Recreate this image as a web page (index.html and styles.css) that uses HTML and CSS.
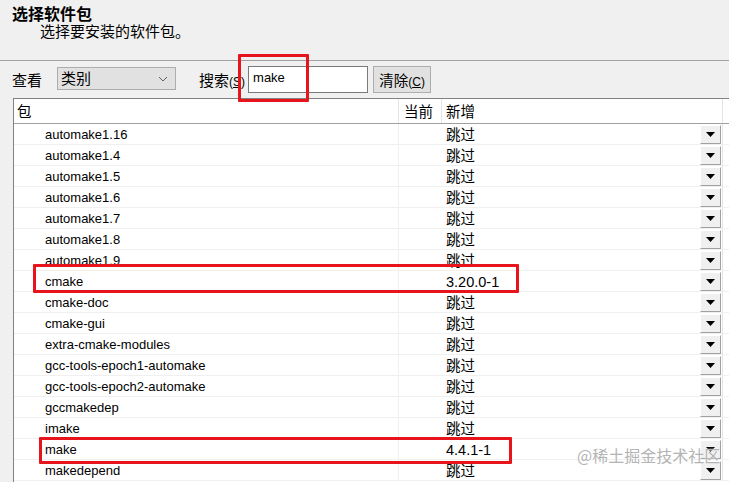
FILE: index.html
```html
<!DOCTYPE html>
<html>
<head>
    <title>选择软件包</title>
    <link rel="stylesheet" href="styles.css">
</head>
<body>
    <div class="page">
        <div class="page-header">
            <h1 class="page-title">选择软件包</h1>
            <p class="page-subtitle">选择要安装的软件包。</p>
        </div>

        <div class="toolbar">
            <span class="tool-label view-label">查看</span>
            <div class="combo">
                <span class="combo-text">类别</span>
                <svg class="combo-arrow" width="10" height="6" viewBox="0 0 10 6"><path d="M1 1 L5 5 L9 1" fill="none" stroke="#606060" stroke-width="1"/></svg>
            </div>
            <span class="tool-label search-label">搜索<span class="accel">(<u>S</u>)</span></span>
            <input type="text" class="search-input" value="make">
            <button class="clear-button">清除<span class="accel">(<u>C</u>)</span></button>
        </div>

        <div class="list">
            <div class="list-head">
                <div class="col col-name">包</div>
                <div class="col col-cur">当前</div>
                <div class="col col-new">新增</div>
            </div>
            <div class="list-body" id="listBody"></div>
        </div>

        <div class="mark mark-search"></div>
        <div class="mark mark-cmake"></div>
        <div class="mark mark-make"></div>
        <div class="watermark">@稀土掘金技术社区</div>
    </div>

    <script>
        const packages = [
            ['automake1.16', '跳过'],
            ['automake1.4', '跳过'],
            ['automake1.5', '跳过'],
            ['automake1.6', '跳过'],
            ['automake1.7', '跳过'],
            ['automake1.8', '跳过'],
            ['automake1.9', '跳过'],
            ['cmake', '3.20.0-1'],
            ['cmake-doc', '跳过'],
            ['cmake-gui', '跳过'],
            ['extra-cmake-modules', '跳过'],
            ['gcc-tools-epoch1-automake', '跳过'],
            ['gcc-tools-epoch2-automake', '跳过'],
            ['gccmakedep', '跳过'],
            ['imake', '跳过'],
            ['make', '4.4.1-1'],
            ['makedepend', '跳过']
        ];

        const listBody = document.getElementById('listBody');
        packages.forEach(function (pkg) {
            const row = document.createElement('div');
            row.className = 'row';
            row.innerHTML =
                '<div class="cell cell-name">' + pkg[0] + '</div>' +
                '<div class="cell cell-cur"></div>' +
                '<div class="cell cell-new"><span class="new-text">' + pkg[1] + '</span>' +
                '<span class="drop-button"><svg width="9" height="5" viewBox="0 0 9 5"><path d="M0 0 H9 L4.5 5 Z" fill="#000"/></svg></span></div>';
            listBody.appendChild(row);
        });
    </script>
</body>
</html>
```

FILE: styles.css
```css
body {
    margin: 0;
    padding: 0;
    background-color: #f0f0f0;
    font-family: 'Liberation Sans', 'Noto Sans CJK SC', sans-serif;
    color: #000;
    overflow: hidden;
}

.page {
    position: relative;
    width: 729px;
    height: 482px;
    overflow: hidden;
}

.page-header {
    height: 61px;
    border-bottom: 1px solid #a0a0a0;
    box-sizing: border-box;
    padding: 4px 0 0 12px;
}

.page-title {
    margin: 0;
    font-family: 'Noto Sans CJK SC', sans-serif;
    font-size: 16px;
    font-weight: bold;
    line-height: 18px;
}

.page-subtitle {
    margin: 1px 0 0;
    padding-left: 28px;
    font-family: 'Noto Sans CJK SC', sans-serif;
    font-size: 15px;
    line-height: 16px;
}

.toolbar {
    display: flex;
    align-items: center;
    height: 37px;
    padding-left: 12px;
    box-sizing: border-box;
}

.tool-label {
    font-family: 'Noto Sans CJK SC', sans-serif;
    font-size: 15px;
}

.accel {
    font-family: 'Liberation Sans', sans-serif;
    font-size: 12px;
}

.combo {
    display: flex;
    align-items: center;
    justify-content: space-between;
    width: 119px;
    height: 23px;
    box-sizing: border-box;
    margin-left: 15px;
    margin-top: -2px;
    padding: 0 7px 0 3px;
    background-color: #e1e1e1;
    border: 1px solid #adadad;
}

.combo-text {
    font-family: 'Noto Sans CJK SC', sans-serif;
    font-size: 15px;
    margin-top: -3px;
}

.search-label {
    margin-left: 23px;
}

.search-input {
    width: 120px;
    height: 27px;
    box-sizing: border-box;
    margin: 0 0 0 3px;
    padding: 0 0 4px 4px;
    border: 1px solid #7a7a7a;
    background-color: #fff;
    font-family: 'Liberation Sans', sans-serif;
    font-size: 13px;
    outline: none;
}

.clear-button {
    width: 58px;
    height: 27px;
    margin-left: 5px;
    padding: 0;
    background-color: #e1e1e1;
    border: 1px solid #adadad;
    font-family: 'Noto Sans CJK SC', sans-serif;
    font-size: 14.5px;
    color: #000;
}

.list {
    margin-left: 13px;
    border-top: 1px solid #828282;
    border-left: 1px solid #828282;
    background-color: #fff;
    height: 400px;
}

.list-head {
    display: flex;
    height: 25px;
    border-bottom: 1px solid #a0a0a0;
    box-sizing: border-box;
}

.col {
    font-family: 'Noto Sans CJK SC', sans-serif;
    font-size: 14.5px;
    line-height: 24px;
    border-right: 1px solid #e5e5e5;
    box-sizing: border-box;
}

.col-name {
    width: 385px;
    padding-left: 3px;
}

.col-cur {
    width: 43px;
    padding-left: 5px;
}

.col-new {
    width: 281px;
    padding-left: 4px;
}

.row {
    display: flex;
    height: 21px;
    border-bottom: 1px solid #f0f0f0;
    box-sizing: border-box;
}

.cell {
    font-size: 13px;
    line-height: 20px;
    box-sizing: border-box;
}

.cell-name {
    width: 385px;
    padding: 1px 0 0 31px;
    border-right: 1px solid #f0f0f0;
}

.cell-cur {
    width: 43px;
}

.cell-new {
    display: flex;
    align-items: center;
    justify-content: space-between;
    width: 281px;
    padding-left: 4px;
    border-right: 1px solid #e5e5e5;
}

.new-text {
    font-family: 'Liberation Sans', 'Noto Sans CJK SC', sans-serif;
    font-size: 14.5px;
    margin-top: 1px;
}

.drop-button {
    display: flex;
    align-items: center;
    justify-content: center;
    width: 21px;
    height: 19px;
    margin-right: 1px;
    box-sizing: border-box;
    background-color: #f0f0f0;
    border-top: 1px solid #fff;
    border-left: 1px solid #fff;
    border-right: 1px solid #a0a0a0;
    border-bottom: 1px solid #a0a0a0;
}

.mark {
    position: absolute;
    border: 3px solid #e8141c;
    box-sizing: border-box;
    border-radius: 1px;
}

.mark-search {
    left: 238px;
    top: 54px;
    width: 71px;
    height: 48px;
}

.mark-cmake {
    left: 33px;
    top: 264px;
    width: 486px;
    height: 29px;
}

.mark-make {
    left: 39px;
    top: 437px;
    width: 473px;
    height: 27px;
}

.watermark {
    position: absolute;
    left: 577px;
    top: 446px;
    font-family: 'Noto Sans CJK SC', sans-serif;
    font-size: 16px;
    line-height: 18px;
    color: #b4b4b4;
    text-shadow: 0 0 2px #fff;
}
```
